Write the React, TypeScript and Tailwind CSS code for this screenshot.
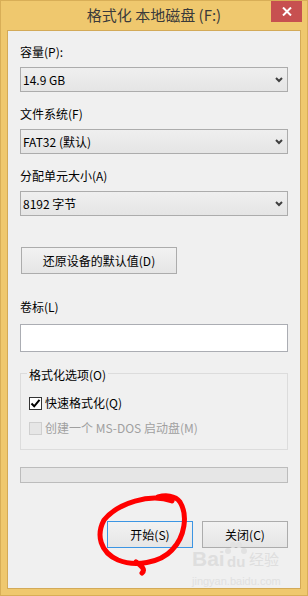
import React from "react";

function Chevron() {
  return (
    <svg width="8" height="6" viewBox="0 0 8 6" className="shrink-0">
      <path d="M1 1 L4 4 L7 1" fill="none" stroke="#404040" strokeWidth="2" />
    </svg>
  );
}

function Combo({ value }: { value: string }) {
  return (
    <div className="h-[25px] border border-[#acacac] bg-linear-to-b from-[#efefef] to-[#e5e5e5] flex items-center pl-[2px] pr-[4px] justify-between">
      <span className="leading-[16px]">{value}</span>
      <Chevron />
    </div>
  );
}

export default function App() {
  return (
    <div className="relative w-[308px] h-[596px] bg-[#efc86e] border border-[#d8ae57] flex flex-col font-['Noto_Sans_CJK_SC',sans-serif] overflow-hidden">
      <div className="h-[29px] flex items-center justify-center text-[15px] text-[#3a3a3a]">
        格式化 本地磁盘 (F:)
      </div>
      <div className="absolute top-0 left-[270px] w-[31px] h-[21px] bg-[#c75050] flex items-center justify-center">
        <svg width="10" height="9" viewBox="0 0 10 9">
          <path d="M1 0.5 L9 8.5 M9 0.5 L1 8.5" stroke="#fff" strokeWidth="2" />
        </svg>
      </div>
      <div className="mx-[6px] h-[559px] border border-[#d3aa58] bg-[#f0f0f0] px-[12px] pt-[13px] text-[12px] leading-[16px] text-black flex flex-col">
        <div className="h-[16px]">容量(P):</div>
        <div className="mt-[7px]"><Combo value="14.9 GB" /></div>
        <div className="h-[16px] mt-[14px]">文件系统(F)</div>
        <div className="mt-[7px]"><Combo value="FAT32 (默认)" /></div>
        <div className="h-[16px] mt-[14px]">分配单元大小(A)</div>
        <div className="mt-[7px]"><Combo value="8192 字节" /></div>
        <div className="mt-[31px] ml-[1px] w-[156px] h-[27px] border border-[#acacac] bg-linear-to-b from-[#f2f2f2] to-[#e5e5e5] flex items-center justify-center">
          还原设备的默认值(D)
        </div>
        <div className="h-[16px] mt-[25px]">卷标(L)</div>
        <div className="mt-[9px] h-[28px] border border-[#abadb3] bg-white"></div>
        <div className="relative mt-[21px] border border-[#dcdcdc] pl-[8px] pt-[21px] pb-[13px]">
          <div className="absolute top-[-7px] left-[6px] px-[2px] bg-[#f0f0f0]">格式化选项(O)</div>
          <div className="flex items-center h-[16px] gap-[3px]">
            <div className="w-[13px] h-[13px] border border-[#333] bg-white flex items-center justify-center">
              <svg width="11" height="11" viewBox="0 0 11 11">
                <path d="M1.5 5.5 L4.2 8.3 L9.5 1.8" fill="none" stroke="#000" strokeWidth="2" />
              </svg>
            </div>
            <span>快速格式化(Q)</span>
          </div>
          <div className="flex items-center h-[16px] gap-[3px] mt-[9px] text-[#a0a0a0]">
            <div className="w-[13px] h-[13px] border border-[#cfcfcf] bg-[#e6e6e6]"></div>
            <span>创建一个 MS-DOS 启动盘(M)</span>
          </div>
        </div>
        <div className="mt-[17px] h-[16px] border border-[#bcbcbc] bg-[#e6e6e6]"></div>
        <div className="mt-[38px] flex justify-end gap-[9px]">
          <div className="w-[86px] h-[27px] border border-[#3c95e3] bg-linear-to-b from-[#f2f2f2] to-[#e6e6e6] flex items-center justify-center">
            开始(S)
          </div>
          <div className="w-[86px] h-[27px] border border-[#acacac] bg-linear-to-b from-[#f2f2f2] to-[#e5e5e5] flex items-center justify-center">
            关闭(C)
          </div>
        </div>
      </div>

      {/* watermark */}
      <span className="absolute left-[191px] top-[548px] text-[21px] leading-[20px] font-bold text-[#dedede] font-['Liberation_Sans',sans-serif] pointer-events-none">
        Bai
      </span>
      <svg width="24" height="16" viewBox="0 0 24 16" className="absolute left-[223px] top-[540px] pointer-events-none">
        <circle cx="4" cy="10" r="3" fill="#e2e2e2" />
        <circle cx="9" cy="4" r="3" fill="#e2e2e2" />
        <circle cx="15" cy="4" r="3" fill="#e2e2e2" />
        <circle cx="20" cy="10" r="3" fill="#e2e2e2" />
      </svg>
      <span className="absolute left-[226px] top-[553px] text-[15px] leading-[16px] font-bold text-[#dedede] font-['Liberation_Sans',sans-serif] pointer-events-none">
        du
      </span>
      <span className="absolute left-[248px] top-[549px] text-[15px] leading-[18px] text-[#dedede] pointer-events-none">
        经验
      </span>
      <span className="absolute left-[191px] top-[573px] text-[11px] leading-[14px] text-[#e0e0e0] font-['Liberation_Sans',sans-serif] pointer-events-none">
        jingyan.baidu.com
      </span>

      {/* red annotation */}
      <svg className="absolute top-[-1px] left-[-1px] pointer-events-none" width="308" height="596" viewBox="0 0 308 596">
        <path
          d="M172 501 C150 493, 118 503, 104 520 C96 535, 100 552, 118 560 C135 567, 160 563, 172 550 C185 537, 188 515, 180 502 C175 495, 165 495, 158 497 M136 562 C141 566, 146 569, 142 573"
          fill="none"
          stroke="#ff0000"
          strokeWidth="5"
          strokeLinecap="round"
          strokeLinejoin="round"
        />
      </svg>
    </div>
  );
}
